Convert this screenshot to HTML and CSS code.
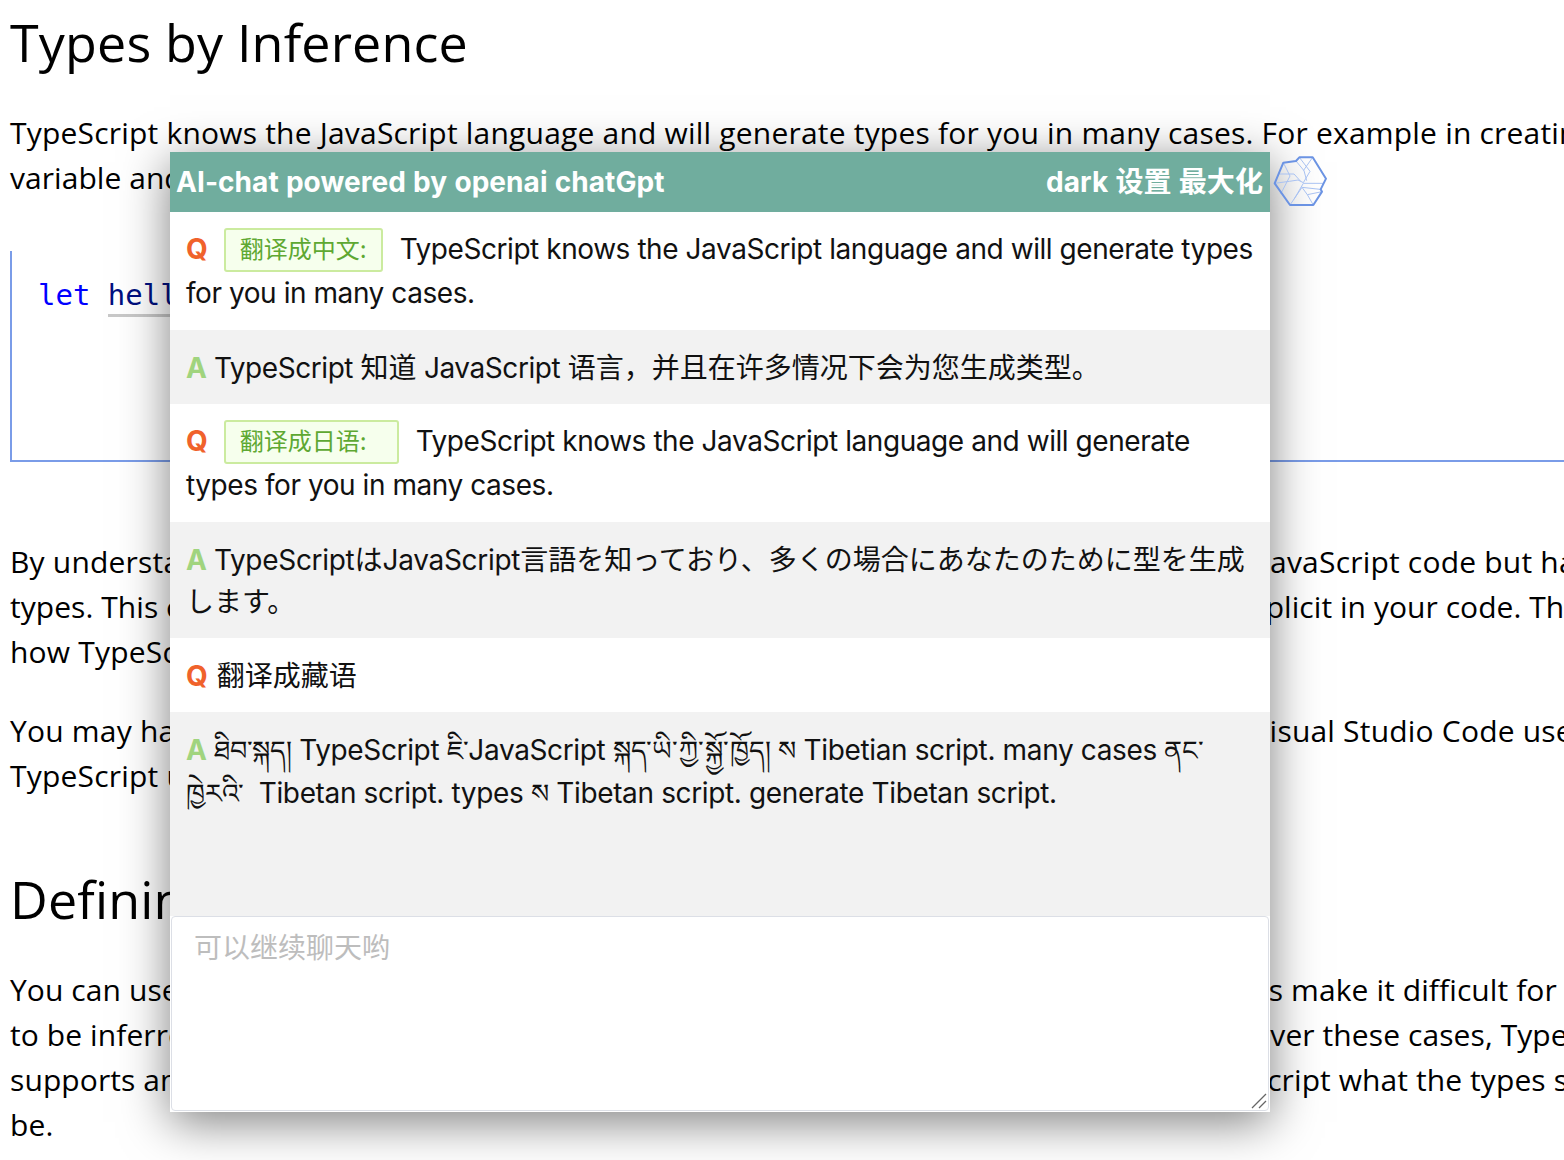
FILE: index.html
```html
<!DOCTYPE html>
<html lang="en">
<head>
<meta charset="utf-8">
<title>Types by Inference</title>
<link rel="stylesheet" href="styles.css">
</head>
<body>
<article class="doc">
  <h1 class="doc-title">Types by Inference</h1>
  <p class="doc-p">TypeScript knows the JavaScript language and will generate types for you in many cases. For example in creating a<br><span class="tight">variable and assigning it to a particular value, TypeScript will use the value as its type.</span></p>
  <pre class="code"><span class="kw">let</span> <span class="ident">helloWorld</span> = "Hello World";</pre>
  <p class="doc-p">By understanding how JavaScript works, TypeScript can build a type-system that accepts JavaScript code but has<br><span class="tight">types. This offers a type-system without needing to add extra characters to make types explicit in your code. That's</span><br>how TypeScript knows that helloWorld is a string in the above example.</p>
  <p class="doc-p">You may have written JavaScript in Visual Studio Code, and had editor auto-completion. Visual Studio Code uses<br>TypeScript under the hood to make it easier to work with JavaScript.</p>
  <h2 class="doc-h2">Defining Types</h2>
  <p class="doc-p doc-p-snug">You can use a wide variety of design patterns in JavaScript. However, some design patterns make it difficult for types<br>to be inferred automatically (for example, patterns that use dynamic programming). To cover these cases, TypeScript<br>supports an extension of the JavaScript language, which offers places for you to tell TypeScript what the types should<br>be.</p>
</article>

<section class="chat">
  <header class="chat-head">
    <span class="chat-title">AI-chat powered by openai chatGpt</span>
    <span class="chat-actions" lang="zh-CN">dark 设置 最大化</span>
  </header>
  <div class="chat-log">
    <div class="msg msg-tagged"><b class="q">Q</b><span class="tag" lang="zh-CN">翻译成中文:</span>TypeScript knows the JavaScript language and will generate types for you in many cases.</div>
    <div class="msg alt" lang="zh-CN"><b class="a">A</b>TypeScript <span class="cjk">知道</span> JavaScript <span class="cjk">语言，并且在许多情况下会为您生成类型。</span></div>
    <div class="msg msg-tagged"><b class="q">Q</b><span class="tag tag-wide" lang="zh-CN">翻译成日语:</span>TypeScript knows the JavaScript language and will generate types for you in many cases.</div>
    <div class="msg alt" lang="ja"><b class="a">A</b>TypeScript<span class="cjk">は</span>JavaScript<span class="cjk">言語を知っており、多くの場合にあなたのために型を生成します。</span></div>
    <div class="msg" lang="zh-CN"><b class="q q-plain">Q</b><span class="cjk">翻译成藏语</span></div>
    <div class="msg alt grow msg-bo"><b class="a">A</b><span lang="bo">ཐིབ་སྐད།</span> TypeScript <span lang="bo">ཇི་</span>JavaScript <span lang="bo">སྐད་ཡི་ ཀྱི་ སྐྱོ་ ཁྱོད།</span> <span lang="bo">ས</span> Tibetian script. many cases <span lang="bo">ནང་</span> <span lang="bo" class="bo-gap">ཁྱེརའི་</span> Tibetan script. types <span lang="bo">ས</span> Tibetan script. generate Tibetan script.</div>
  </div>
  <div class="chat-input-wrap">
    <textarea class="chat-input" lang="zh-CN" placeholder="可以继续聊天哟"></textarea>
    <svg class="resize-grip" viewBox="0 0 16 16" width="16" height="16" aria-hidden="true">
      <path d="M1 15 L15 1 M8 15 L15 8"/>
    </svg>
  </div>
</section>

<svg class="chat-logo" viewBox="0 0 210 192" width="70" height="64" aria-hidden="true">
  <g fill="none" stroke-linejoin="round">
    <path class="logo-inner" d="M78 33 L102 62 L110 92 M88 22 L120 64 L100 98 L84 90 M128 22 L100 62"/>
    <path class="logo-inner" d="M28 72 L72 72 L92 94 M40 38 L60 78 L32 132 M14 100 L58 94 L84 90"/>
    <path class="logo-inner" d="M60 165 L96 112 L150 118 M72 148 L100 100 L162 100 M96 112 L112 134 L156 125 M130 165 L112 134"/>
    <path class="logo-outer" d="M14 100 L40 38 L78 33 L88 22 L128 22 L168 86 L152 118 L156 125 L130 165 L60 165 Z"/>
  </g>
</svg>
</body>
</html>
```

FILE: styles.css
```css
html, body {
  margin: 0;
  height: 1160px;
  overflow: hidden;
  background: #fff;
}

body {
  position: relative;
  width: 1564px;
  font-family: "Open Sans", "Noto Sans", sans-serif;
  color: #000;
}

.doc {
  width: 1800px;
  padding: 0 0 0 10px;
}

.doc-title {
  margin: 0;
  padding-top: 6px;
  font-size: 52px;
  line-height: 72px;
  font-weight: 400;
  letter-spacing: 0.17px;
}

.doc-p {
  margin: 0 0 34px;
  font-size: 30px;
  line-height: 45px;
  white-space: nowrap;
  letter-spacing: 0.2px;
}

.tight { letter-spacing: 0.05px; }

.doc-p-snug { letter-spacing: 0.09px; }

.doc-title + .doc-p {
  margin-top: 32px;
}

.code {
  margin: 51px 0 77px;
  height: 211px;
  box-sizing: border-box;
  padding: 22px 0 0 26px;
  border-left: 2px solid #7a9ce8;
  border-bottom: 2px solid #7a9ce8;
  font-family: "DejaVu Sans Mono", monospace;
  font-size: 29px;
  line-height: 44px;
  color: #000;
}

.kw { color: #0000ff; }

.ident {
  color: #001080;
  padding-bottom: 2px;
  border-bottom: 3px solid #c8c8c8;
}

.doc-h2 {
  margin: 65px 0 32px;
  font-size: 52px;
  line-height: 72px;
  font-weight: 400;
  letter-spacing: 0.17px;
}

.chat {
  position: absolute;
  left: 170px;
  top: 152px;
  width: 1100px;
  height: 960px;
  display: flex;
  flex-direction: column;
  background: #fff;
  box-shadow: 0 10px 45px rgba(0, 0, 0, 0.5);
  font-family: Inter, "Noto Sans CJK SC", "Noto Sans Tibetan", sans-serif;
  font-size: 28px;
  line-height: 42px;
}

.chat-head {
  flex: none;
  height: 60px;
  display: flex;
  align-items: center;
  justify-content: space-between;
  padding: 0 7px 0 6px;
  background: #70ad9e;
  color: #fff;
  font-weight: 700;
  letter-spacing: 0.06px;
  word-spacing: 0.5px;
}

.chat-log {
  flex: 1;
  display: flex;
  flex-direction: column;
  min-height: 0;
}

.msg {
  padding: 17px 16px 15px;
  background: #fff;
  color: #111;
  letter-spacing: -0.44px;
}

.msg-tagged { padding: 16px; }

.msg-bo { letter-spacing: -0.36px; }

.msg[lang="ja"] {
  font-family: Inter, "Noto Sans CJK JP", sans-serif;
  letter-spacing: -0.3px;
}

.msg [lang="bo"] {
  font-size: 27px;
  letter-spacing: -0.2px;
  word-spacing: -6px;
}

.msg .bo-gap { margin-right: 7px; }

.cjk { letter-spacing: 0; }

.alt { background: #f2f2f2; }
.grow { flex: 1; }

.q,
.a {
  margin-right: 7px;
  font-weight: 700;
  letter-spacing: 0;
}

.q { color: #f0622b; }
.a { color: #a0d47e; }
.q-plain { margin-right: 9px; }

.tag {
  display: inline-block;
  box-sizing: border-box;
  height: 44px;
  margin: 0 17px 0 9px;
  padding: 0 14px;
  border: 2px solid #cbeb9f;
  border-radius: 3px;
  background: #f6ffed;
  color: #5ea832;
  font-size: 24px;
  line-height: 40px;
  letter-spacing: 0;
  vertical-align: top;
}

.tag-wide { padding-right: 30px; }

.chat-input-wrap {
  position: relative;
  flex: none;
  height: 196px;
}

.chat-input {
  display: block;
  box-sizing: border-box;
  width: 1098px;
  height: 195px;
  margin: 0 1px 1px;
  padding: 10px 22px;
  border: 1px solid #dcdfe6;
  border-radius: 4px;
  outline: none;
  resize: none;
  background: #fff;
  font: 28px/42px Inter, "Noto Sans CJK SC", sans-serif;
}

.chat-input::placeholder { color: #bdbdbd; }

.resize-grip {
  position: absolute;
  right: 3px;
  bottom: 3px;
}

.resize-grip path {
  fill: none;
  stroke: #666;
  stroke-width: 1.3;
}

.chat-logo {
  position: absolute;
  left: 1270px;
  top: 150px;
}

.logo-outer { stroke: #6b93e3; stroke-width: 6; }
.logo-inner { stroke: #a9c2f2; stroke-width: 3; }
```
